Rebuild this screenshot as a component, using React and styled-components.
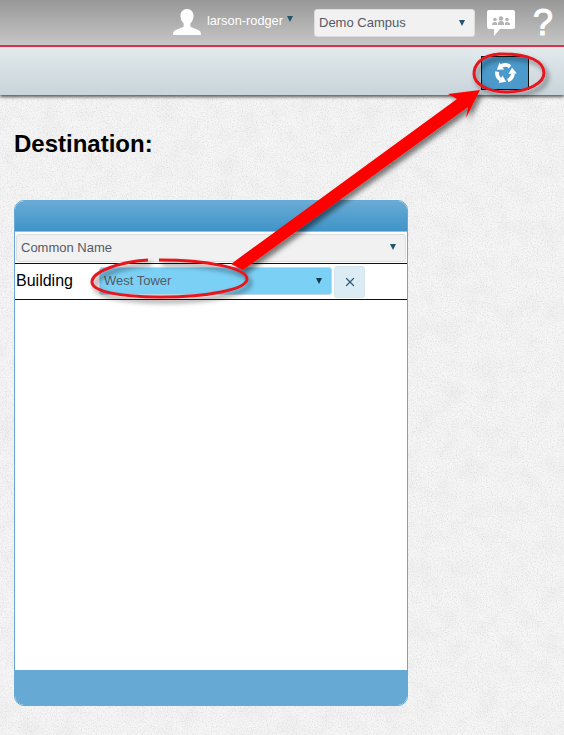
import React from "react";
import styled, { createGlobalStyle } from "styled-components";
import { X } from "lucide-react";

const GlobalStyle = createGlobalStyle`
  html, body {
    margin: 0;
    padding: 0;
    background: #f1f1f1;
    font-family: "Liberation Sans", Arial, sans-serif;
  }
`;

const Page = styled.div`
  position: relative;
  width: 564px;
  height: 735px;
  overflow: hidden;
`;

const Texture = styled.svg`
  position: absolute;
  inset: 0;
  width: 564px;
  height: 735px;
`;

const TopBar = styled.header`
  position: relative;
  height: 45px;
  display: flex;
  align-items: center;
  justify-content: flex-end;
  background: linear-gradient(#989898, #c6c6c6);
  border-bottom: 2px solid #e2314f;
`;

const UserName = styled.span`
  margin: -4px 0 0 6px;
  color: #fff;
  font-size: 12.8px;
`;

const Caret = styled.span`
  display: inline-block;
  width: 0;
  height: 0;
  border-left: 3.5px solid transparent;
  border-right: 3.5px solid transparent;
  border-top: 6px solid ${(props) => props.color || "#24566b"};
`;

const UserCaret = styled(Caret)`
  margin: -7px 21px 0 4px;
`;

const SelectBox = styled.div`
  box-sizing: border-box;
  display: flex;
  align-items: center;
  justify-content: space-between;
  border-radius: 3px;
  border: 1px solid #ddd;
  background: #f1f1f1;
  color: #555a66;
  font-size: 13px;
`;

const CampusSelect = styled(SelectBox)`
  width: 161px;
  height: 28px;
  margin: 0 12px 0 0;
  padding: 0 9px 0 4px;
`;

const IconSlot = styled.svg`
  flex: none;
`;

const UserIcon = styled(IconSlot)`
  margin-top: -1px;
`;

const Help = styled.span`
  width: 20px;
  margin: 0 11px 0 18px;
  color: #fff;
  font-size: 36px;
  line-height: 36px;
  text-align: center;
  -webkit-text-stroke: 1px #fff;
`;

const ToolBar = styled.div`
  position: relative;
  box-sizing: border-box;
  height: 48px;
  padding: 9px 35px 0 0;
  display: flex;
  justify-content: flex-end;
  align-items: flex-start;
  background: linear-gradient(#e2eaec, #c8d4da);
  box-shadow: 0 2px 3px rgba(40, 40, 40, 0.75);
`;

const RefreshButton = styled.div`
  box-sizing: border-box;
  width: 48px;
  height: 34px;
  display: flex;
  align-items: center;
  justify-content: center;
  background: #4b9acb;
  border: 1px solid #111;
`;

const Content = styled.main`
  position: relative;
  padding: 35px 14px 0;
`;

const Heading = styled.h1`
  margin: 0;
  height: 70px;
  color: #000;
  font-size: 24px;
  line-height: 27px;
  font-weight: 700;
`;

const Panel = styled.section`
  box-sizing: border-box;
  width: 394px;
  height: 506px;
  display: flex;
  flex-direction: column;
  background: #fff;
  border: 1px solid #65a9d4;
  border-radius: 10px;
  overflow: hidden;
`;

const PanelHead = styled.div`
  height: 30px;
  flex: none;
  background: linear-gradient(#69abd5, #3f94c8);
  border-bottom: 1px solid #8fc0de;
`;

const NameSelect = styled(SelectBox)`
  width: 390px;
  height: 28px;
  margin: 2px 0 1px 1px;
  padding: 0 9px 2px 4px;
  flex: none;
`;

const FilterRow = styled.div`
  box-sizing: border-box;
  height: 37px;
  flex: none;
  display: flex;
  align-items: center;
  border-top: 1px solid #111;
  border-bottom: 1px solid #111;
`;

const FilterLabel = styled.span`
  width: 83px;
  padding-left: 1px;
  color: #000;
  font-size: 16px;
  margin-top: -1px;
`;

const BuildingSelect = styled(SelectBox)`
  width: 233px;
  height: 28px;
  padding: 0 9px 0 4px;
  margin: -2px 2px 0 0;
  background: #7bd0f6;
  border-color: #c5d8e4;
`;

const ClearButton = styled.div`
  box-sizing: border-box;
  width: 31px;
  height: 32px;
  padding-top: 1px;
  display: flex;
  align-items: center;
  justify-content: center;
  border-radius: 3px;
  border: 1px solid #d6e4ec;
  background: #dcecf5;
  color: #2f5f78;
`;

const Body = styled.div`
  flex: 1;
`;

const PanelFoot = styled.div`
  height: 36px;
  flex: none;
  margin: 0 -1px -1px;
  background: #65a9d4;
`;

const Annotation = styled.svg`
  position: absolute;
  left: 0;
  top: 0;
  width: 564px;
  height: 735px;
  pointer-events: none;
`;

const App = () => {
  return (
    <Page>
      <GlobalStyle />
      <Texture aria-hidden="true">
        <filter id="specks">
          <feTurbulence type="fractalNoise" baseFrequency="0.8" numOctaves="2" seed="8" />
          <feColorMatrix values="0 0 0 0 0.5  0 0 0 0 0.5  0 0 0 0 0.5  0.9 0 0 0 -0.42" />
        </filter>
        <filter id="blotches">
          <feTurbulence type="fractalNoise" baseFrequency="0.05" numOctaves="4" seed="21" />
          <feColorMatrix values="0 0 0 0 0.6  0 0 0 0 0.6  0 0 0 0 0.6  0.3 0 0 0 -0.12" />
        </filter>
        <rect width="564" height="735" fill="#f5f5f5" />
        <rect width="564" height="735" filter="url(#blotches)" />
        <rect width="564" height="735" filter="url(#specks)" />
      </Texture>

      <TopBar>
        <UserIcon width="28" height="27" viewBox="0 0 30 29">
          <path
            fill="#fff"
            d="M15 0c4.400 0 7 3.300 7 7.500 0 3.400-1.500 6.300-3.400 8v3.300c0 1.200 8 2.500 10.400 5.200.6.800 1 2 1 4H0c0-2 .4-3.200 1-4 2.400-2.700 10.400-4 10.400-5.200v-3.300C9.500 13.800 8 10.900 8 7.500 8 3.300 10.600 0 15 0z"
          />
        </UserIcon>
        <UserName>larson-rodger</UserName>
        <UserCaret />
        <CampusSelect>
          Demo Campus
          <Caret />
        </CampusSelect>
        <IconSlot width="28" height="26" viewBox="0 0 28 26">
          <path
            fill="#fff"
            d="M2 0h24a2 2 0 0 1 2 2v15a2 2 0 0 1-2 2H13l-6 7v-7H2a2 2 0 0 1-2-2V2a2 2 0 0 1 2-2z"
          />
          <g fill="#b4b4b4">
            <circle cx="8" cy="9.500" r="1.800" />
            <circle cx="20" cy="9.500" r="1.800" />
            <circle cx="14" cy="8.500" r="2.300" />
            <path d="M5 15c0-2 1-3 3-3 1 0 2 .5 2 1.500V15zM18 15v-1.500c0-1 1-1.500 2-1.500 2 0 3 1 3 3zM10.800 15c0-2.500 1-4 3.200-4s3.200 1.500 3.200 4z" />
          </g>
        </IconSlot>
        <Help>?</Help>
      </TopBar>

      <ToolBar>
        <RefreshButton>
          <IconSlot width="26" height="26" viewBox="0 0 26 26">
            {[0, 120, 240].map((angle) => (
              <g key={angle} transform={`rotate(${angle} 13 13)`} fill="#fff">
                <path
                  fill="none"
                  stroke="#fff"
                  strokeWidth="3.800"
                  d="M15.800 20.500A8 8 0 0 0 20.970 13.500"
                />
                <path d="M20 7.600L24.800 13.600 16.400 13.900z" />
              </g>
            ))}
          </IconSlot>
        </RefreshButton>
      </ToolBar>

      <Content>
        <Heading>Destination:</Heading>
        <Panel>
          <PanelHead />
          <NameSelect>
            Common Name
            <Caret />
          </NameSelect>
          <FilterRow>
            <FilterLabel>Building</FilterLabel>
            <BuildingSelect>
              West Tower
              <Caret color="#17384a" />
            </BuildingSelect>
            <ClearButton>
              <X size={14} strokeWidth={2.2} />
            </ClearButton>
          </FilterRow>
          <Body />
          <PanelFoot />
        </Panel>
      </Content>

      <Annotation aria-hidden="true">
        <defs>
          <filter id="drop" x="-20%" y="-20%" width="140%" height="140%">
            <feDropShadow dx="3" dy="4" stdDeviation="2.500" floodColor="#000" floodOpacity="0.5" />
          </filter>
        </defs>
        <g filter="url(#drop)">
          <path fill="#f00" d="M231 264L457 99 448 94 480 90 466 118 468 107 243 270z" />
          <path
            fill="none"
            stroke="#e8141c"
            strokeWidth="3"
            d="M148 260C118 262 92 272 92 282c0 9 26 15 68 15 50 0 87-8 87-18 0-11-40-19-88-19"
          />
          <path
            fill="none"
            stroke="#e8141c"
            strokeWidth="3"
            d="M500 54c-20 1-26 12-26 20 0 10 14 18 32 18 22 0 38-9 38-19 0-11-14-20-46-19"
          />
        </g>
      </Annotation>
    </Page>
  );
};

export default App;
